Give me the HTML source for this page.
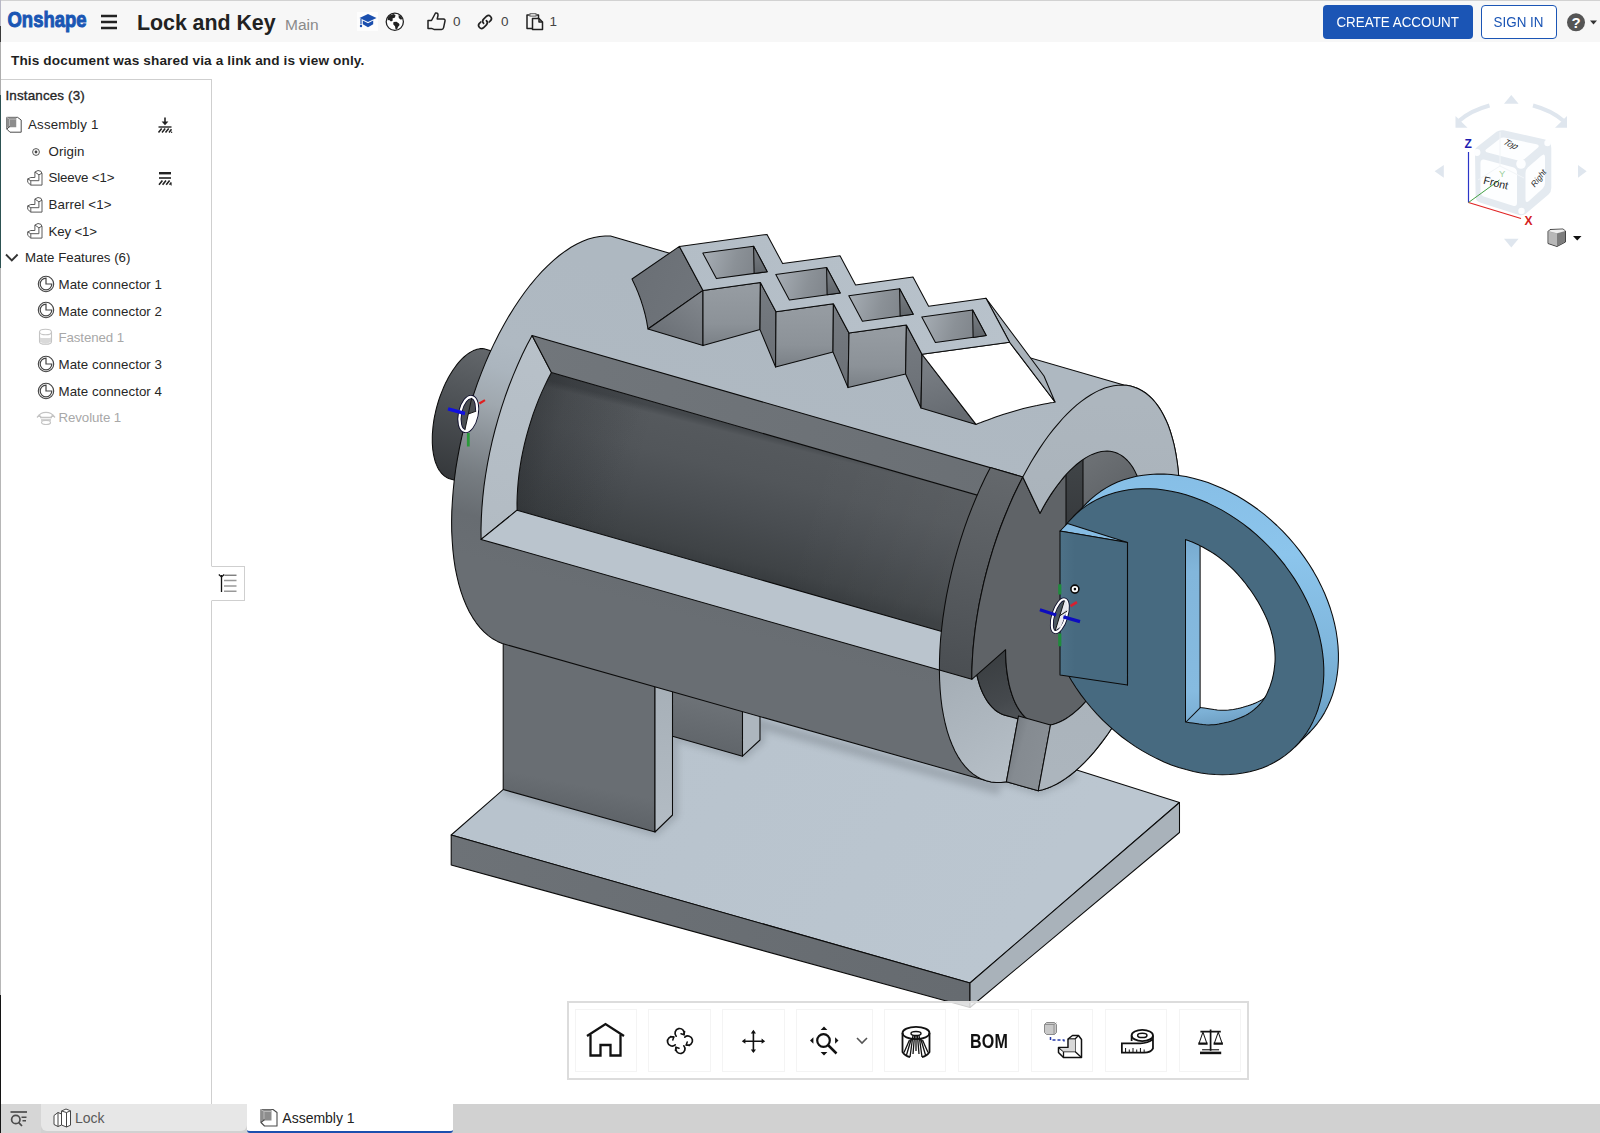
<!DOCTYPE html>
<html lang="en"><head><meta charset="utf-8"><title>Lock and Key | Assembly 1</title>
<style>

html,body{margin:0;padding:0;background:#fff;}
body{width:1600px;height:1133px;overflow:hidden;font-family:"Liberation Sans",sans-serif;color:#222;}
#app{position:relative;width:1600px;height:1133px;overflow:hidden;background:#fff;}
#model{position:absolute;left:0;top:0;}
.abs{position:absolute;white-space:nowrap;}
#hdr{position:absolute;left:0;top:0;width:1600px;height:42px;background:#f7f7f7;}
#topline{position:absolute;left:0;top:0;width:1600px;height:1px;background:#d2d2d2;}
#leftline{position:absolute;left:0;top:0;width:1px;height:1133px;background:linear-gradient(to bottom,#b8b8c6 0,#b8b8c6 26px,#3a3a3a 26px,#3a3a3a 42px,#adadad 42px,#adadad 95px,#2d5252 95px,#2d5252 268px,#b6b6b6 268px,#b6b6b6 995px,#141414 995px,#141414 1133px);}
.t{position:absolute;white-space:nowrap;line-height:1;}
#title{left:137px;top:13.3px;font-size:21.4px;font-weight:bold;color:#222;letter-spacing:-0.05px;}
#branch{left:285px;top:16.5px;font-size:15.5px;color:#8a8a8a;}
.cnt{font-size:13.5px;color:#444;top:15px;}
.btn{position:absolute;top:5px;height:34px;box-sizing:border-box;border-radius:4px;font-size:14.8px;line-height:34px;text-align:center;}
.btn span{display:inline-block;transform:scaleX(0.905);transform-origin:50% 50%;white-space:nowrap;}
#create{left:1323px;width:150px;background:#1b55b5;color:#fff;}
#signin{left:1481px;width:76px;background:#fff;color:#1b55b5;border:1px solid #1b55b5;line-height:32px;}
#msg{left:11px;top:54px;font-size:13.6px;font-weight:bold;color:#1f1f1f;letter-spacing:0.13px;}
#panel{position:absolute;left:1px;top:79px;width:211px;height:1025px;background:#fff;border-top:1px solid #cfcfcf;border-right:1px solid #cfcfcf;box-sizing:border-box;}
#ptoggle{position:absolute;left:211px;top:566px;width:34px;height:35px;box-sizing:border-box;border:1px solid #cfcfcf;border-left:1px solid #fff;background:#fff;}
.row{position:absolute;white-space:nowrap;font-size:13.3px;line-height:1;color:#262626;}
.row.dim{color:#a8a8a8;}
#tabbar{position:absolute;left:0;top:1104px;width:1600px;height:29px;background:#d1d1d1;}
#tabbtn{position:absolute;left:1px;top:0;width:40px;height:29px;background:#d6d6d6;}
#tab1{position:absolute;left:41px;top:0;width:206px;height:27px;background:#e7e7e7;border-radius:0 0 6px 6px;}
#tab2{position:absolute;left:247px;top:0;width:206px;height:29px;background:#fff;border-bottom:2.5px solid #1b4fae;box-sizing:border-box;border-radius:0 0 3px 3px;}
.tabt{position:absolute;font-size:14px;line-height:1;white-space:nowrap;}
#toolbar{position:absolute;left:567px;top:1001px;width:682px;height:79px;box-sizing:border-box;border:2px solid #dcdcdc;background:rgba(255,255,255,0.8);}
.tb{position:absolute;top:6px;height:63px;box-sizing:border-box;border:1px solid #f4f4f4;background:rgba(255,255,255,0.75);}
svg{overflow:visible}

</style></head>
<body>
<div id="app">
<svg id="model" width="1600" height="1133" viewBox="0 0 1600 1133"><defs><linearGradient id="g1" gradientUnits="userSpaceOnUse" x1="600" y1="700" x2="1000" y2="950"><stop offset="0" stop-color="#b8c3cd"/><stop offset="1" stop-color="#bbc6d0"/></linearGradient><linearGradient id="g2" gradientUnits="userSpaceOnUse" x1="451.2" y1="835" x2="970" y2="983"><stop offset="0" stop-color="#6d7277"/><stop offset="1" stop-color="#666b70"/></linearGradient><filter id="ao" x="-20%" y="-20%" width="140%" height="140%"><feGaussianBlur stdDeviation="3.5"/></filter><linearGradient id="g3" gradientUnits="userSpaceOnUse" x1="700" y1="700" x2="690" y2="750"><stop offset="0" stop-color="#6d7277"/><stop offset="1" stop-color="#5f6469"/></linearGradient><linearGradient id="g4" gradientUnits="userSpaceOnUse" x1="600" y1="660" x2="570" y2="815"><stop offset="0" stop-color="#696e73"/><stop offset="0.8" stop-color="#696e73"/><stop offset="1" stop-color="#5e6368"/></linearGradient><linearGradient id="g5" gradientUnits="userSpaceOnUse" x1="660" y1="690" x2="660" y2="830"><stop offset="0" stop-color="#a7b0b8"/><stop offset="1" stop-color="#b3bcc4"/></linearGradient><linearGradient id="g6" gradientUnits="userSpaceOnUse" x1="486.2097685131967" y1="349.1442768138785" x2="449.7906314868034" y2="478.7094831861216"><stop offset="0" stop-color="#63676b"/><stop offset="0.45" stop-color="#4d5155"/><stop offset="1" stop-color="#35383b"/></linearGradient><linearGradient id="g7" gradientUnits="userSpaceOnUse" x1="822.9589098905919" y1="326.4384051474268" x2="724.3223163101419" y2="677.3492626409577"><stop offset="0" stop-color="#aeb8c1"/><stop offset="0.28" stop-color="#afb9c2"/><stop offset="0.35" stop-color="#abb5be"/><stop offset="0.45" stop-color="#a0a8af"/><stop offset="0.54" stop-color="#8c9399"/><stop offset="0.65" stop-color="#767c81"/><stop offset="0.76" stop-color="#676c71"/><stop offset="0.87" stop-color="#696e73"/><stop offset="1" stop-color="#696e73"/></linearGradient><linearGradient id="g8" gradientUnits="userSpaceOnUse" x1="781.0930191726984" y1="438.60950638964886" x2="746.6953570230444" y2="575.763086933692"><stop offset="0" stop-color="#44484c"/><stop offset="0.05" stop-color="#55595d"/><stop offset="0.3" stop-color="#52565a"/><stop offset="0.6" stop-color="#494d51"/><stop offset="0.9" stop-color="#3f4346"/><stop offset="1" stop-color="#383c3f"/></linearGradient><linearGradient id="g9" gradientUnits="userSpaceOnUse" x1="545" y1="380" x2="640" y2="420"><stop offset="0" stop-color="rgba(40,43,46,0.25)"/><stop offset="1" stop-color="rgba(40,43,46,0)"/></linearGradient><linearGradient id="g10" gradientUnits="userSpaceOnUse" x1="527.7296803180088" y1="431.4399109360877" x2="984.6006867340005" y2="562.5058004148844"><stop offset="0" stop-color="rgba(20,22,24,0.22)"/><stop offset="0.06" stop-color="rgba(20,22,24,0.10)"/><stop offset="0.25" stop-color="rgba(20,22,24,0)"/><stop offset="0.6" stop-color="rgba(255,255,255,0)"/><stop offset="1" stop-color="rgba(255,255,255,0.04)"/></linearGradient><linearGradient id="g11" gradientUnits="userSpaceOnUse" x1="532.0666632526941" y1="335.4540499790758" x2="481.1313473124834" y2="539.430596575472"><stop offset="0" stop-color="#b8c1c9"/><stop offset="1" stop-color="#b2bbc3"/></linearGradient><linearGradient id="g12" gradientUnits="userSpaceOnUse" x1="532.0666632526941" y1="335.4540499790758" x2="1022.8112229877044" y2="476.9669085496531"><stop offset="0" stop-color="#71767b"/><stop offset="1" stop-color="#6a6f74"/></linearGradient><linearGradient id="g13" gradientUnits="userSpaceOnUse" x1="939.3716237132005" y1="670.0226014641548" x2="1006.3824519635114" y2="781.7012543905088"><stop offset="0" stop-color="#a4adb5"/><stop offset="1" stop-color="#b6bfc7"/></linearGradient><linearGradient id="g14" gradientUnits="userSpaceOnUse" x1="1005.5840098833804" y1="649.7055607163845" x2="1035.3886539650744" y2="723.8423960744309"><stop offset="0" stop-color="#3a3e41"/><stop offset="0.6" stop-color="#45494d"/><stop offset="1" stop-color="#54585c"/></linearGradient><linearGradient id="g15" gradientUnits="userSpaceOnUse" x1="1022.8112229877044" y1="476.9669085496531" x2="971.8244590864895" y2="679.2712010613104"><stop offset="0" stop-color="#64686c"/><stop offset="0.5" stop-color="#585c60"/><stop offset="1" stop-color="#4a4e52"/></linearGradient><linearGradient id="g16" gradientUnits="userSpaceOnUse" x1="1066" y1="470" x2="1066" y2="530"><stop offset="0" stop-color="#3f4346"/><stop offset="1" stop-color="#36393c"/></linearGradient><linearGradient id="g17" gradientUnits="userSpaceOnUse" x1="1090" y1="460" x2="1120" y2="500"><stop offset="0" stop-color="#6c7074"/><stop offset="1" stop-color="#5f6367"/></linearGradient><linearGradient id="g18" gradientUnits="userSpaceOnUse" x1="1018.5070150753702" y1="715.8606307135934" x2="1050.4655082898867" y2="724.9583419141582"><stop offset="0" stop-color="#777d83"/><stop offset="0.35" stop-color="#858b91"/><stop offset="1" stop-color="#888e94"/></linearGradient><linearGradient id="g19" gradientUnits="userSpaceOnUse" x1="1081.3054350203313" y1="401.3220892772816" x2="1070.0945649796688" y2="775.2779107227184"><stop offset="0" stop-color="#adb6be"/><stop offset="0.5" stop-color="#a8b1b9"/><stop offset="1" stop-color="#acb5bd"/></linearGradient><linearGradient id="g20" gradientUnits="userSpaceOnUse" x1="640" y1="280" x2="690" y2="300"><stop offset="0" stop-color="#6b7076"/><stop offset="1" stop-color="#6f747a"/></linearGradient><linearGradient id="g21" gradientUnits="userSpaceOnUse" x1="700" y1="300" x2="670" y2="340"><stop offset="0" stop-color="#80858b"/><stop offset="1" stop-color="#6c7177"/></linearGradient><linearGradient id="g22" gradientUnits="userSpaceOnUse" x1="703.0" y1="290.4" x2="703" y2="345.6"><stop offset="0" stop-color="#959ba1"/><stop offset="0.6" stop-color="#8c9298"/><stop offset="1" stop-color="#7a8086"/></linearGradient><linearGradient id="g23" gradientUnits="userSpaceOnUse" x1="760.3608932714617" y1="282.54234338747096" x2="775.6" y2="367"><stop offset="0" stop-color="#777c82"/><stop offset="1" stop-color="#6a6f75"/></linearGradient><linearGradient id="g24" gradientUnits="userSpaceOnUse" x1="776.0" y1="311.7" x2="775.6" y2="367"><stop offset="0" stop-color="#959ba1"/><stop offset="0.6" stop-color="#8c9298"/><stop offset="1" stop-color="#7a8086"/></linearGradient><linearGradient id="g25" gradientUnits="userSpaceOnUse" x1="833.3608932714617" y1="303.842343387471" x2="848" y2="387.6"><stop offset="0" stop-color="#777c82"/><stop offset="1" stop-color="#6a6f75"/></linearGradient><linearGradient id="g26" gradientUnits="userSpaceOnUse" x1="849.0" y1="333.0" x2="848" y2="387.6"><stop offset="0" stop-color="#959ba1"/><stop offset="0.6" stop-color="#8c9298"/><stop offset="1" stop-color="#7a8086"/></linearGradient><linearGradient id="g27" gradientUnits="userSpaceOnUse" x1="906.3608932714617" y1="325.142343387471" x2="921" y2="408"><stop offset="0" stop-color="#777c82"/><stop offset="1" stop-color="#6a6f75"/></linearGradient><linearGradient id="g28" gradientUnits="userSpaceOnUse" x1="922.0" y1="354.3" x2="940" y2="420"><stop offset="0" stop-color="#7d8288"/><stop offset="1" stop-color="#666b71"/></linearGradient><linearGradient id="g29" gradientUnits="userSpaceOnUse" x1="679.4" y1="246.4" x2="1009.6" y2="342.3"><stop offset="0" stop-color="#b3bdc6"/><stop offset="1" stop-color="#b8c2cb"/></linearGradient><linearGradient id="g30" gradientUnits="userSpaceOnUse" x1="702.752" y1="253.12" x2="767.2479999999999" y2="271.68"><stop offset="0" stop-color="#a7aeb5"/><stop offset="0.5" stop-color="#8b9197"/><stop offset="1" stop-color="#7a7f85"/></linearGradient><linearGradient id="g31" gradientUnits="userSpaceOnUse" x1="753.56" y1="246.16" x2="754.06" y2="273.48657534246576"><stop offset="0" stop-color="#7c8187"/><stop offset="1" stop-color="#60656a"/></linearGradient><linearGradient id="g32" gradientUnits="userSpaceOnUse" x1="775.752" y1="274.42" x2="840.2479999999999" y2="292.98"><stop offset="0" stop-color="#a7aeb5"/><stop offset="0.5" stop-color="#8b9197"/><stop offset="1" stop-color="#7a7f85"/></linearGradient><linearGradient id="g33" gradientUnits="userSpaceOnUse" x1="826.56" y1="267.46000000000004" x2="827.06" y2="294.78657534246577"><stop offset="0" stop-color="#7c8187"/><stop offset="1" stop-color="#60656a"/></linearGradient><linearGradient id="g34" gradientUnits="userSpaceOnUse" x1="848.752" y1="295.72" x2="913.2479999999999" y2="314.28000000000003"><stop offset="0" stop-color="#a7aeb5"/><stop offset="0.5" stop-color="#8b9197"/><stop offset="1" stop-color="#7a7f85"/></linearGradient><linearGradient id="g35" gradientUnits="userSpaceOnUse" x1="899.56" y1="288.76000000000005" x2="900.06" y2="316.0865753424658"><stop offset="0" stop-color="#7c8187"/><stop offset="1" stop-color="#60656a"/></linearGradient><linearGradient id="g36" gradientUnits="userSpaceOnUse" x1="921.752" y1="317.02000000000004" x2="986.2479999999999" y2="335.58000000000004"><stop offset="0" stop-color="#a7aeb5"/><stop offset="0.5" stop-color="#8b9197"/><stop offset="1" stop-color="#7a7f85"/></linearGradient><linearGradient id="g37" gradientUnits="userSpaceOnUse" x1="972.56" y1="310.06000000000006" x2="973.06" y2="337.3865753424658"><stop offset="0" stop-color="#7c8187"/><stop offset="1" stop-color="#60656a"/></linearGradient><linearGradient id="g38" gradientUnits="userSpaceOnUse" x1="1200" y1="470" x2="1200" y2="750"><stop offset="0" stop-color="#86bee6"/><stop offset="0.3" stop-color="#8cc5ec"/><stop offset="0.62" stop-color="#80b7dd"/><stop offset="0.85" stop-color="#6fa5ca"/><stop offset="1" stop-color="#6699bd"/></linearGradient><linearGradient id="g39" gradientUnits="userSpaceOnUse" x1="1190" y1="545" x2="1215" y2="725"><stop offset="0" stop-color="#79acd1"/><stop offset="0.15" stop-color="#82b6db"/><stop offset="0.8" stop-color="#86bbe0"/><stop offset="0.92" stop-color="#7db1d6"/><stop offset="1" stop-color="#6e9fc3"/></linearGradient><linearGradient id="g40" gradientUnits="userSpaceOnUse" x1="1060" y1="600" x2="1075" y2="600"><stop offset="0" stop-color="#4d7187"/><stop offset="1" stop-color="#476a80"/></linearGradient></defs><path d="M451.2 835.0 L970.0 983.0 L1179.5 802.5 L672.0 642.0 Z" fill="url(#g1)" stroke="#0b0b0b" stroke-width="1.05" stroke-linejoin="round"/>
<path d="M451.2 835.0 L970.0 983.0 L970.0 1007.5 L451.2 865.0 Z" fill="url(#g2)" stroke="#0b0b0b" stroke-width="1.05" stroke-linejoin="round"/>
<path d="M970.0 983.0 L1179.5 802.5 L1179.5 832.5 L970.0 1007.5 Z" fill="#a9b2ba" stroke="#0b0b0b" stroke-width="1.05" stroke-linejoin="round"/>
<clipPath id="plateclip"><path d="M451.2 835.0 L970.0 983.0 L1179.5 802.5 L672.0 642.0 Z"/></clipPath>
<g clip-path="url(#plateclip)"><g filter="url(#ao)" opacity="0.26" fill="none" stroke="#4a5057" stroke-width="7" stroke-linejoin="round">
<path d="M503 789.5 L655 832 L674 815 L674 740"/><path d="M672 736 L742.5 756 L761 740 L761 718"/><path d="M960 770 L1007 781.5 L1039 791 L1075 775"/><path d="M672 700 L1000 790" stroke-width="10"/>
</g></g>
<path d="M672.5 684.0 L742.5 703.7 L742.5 756.2 L672.5 736.2 Z" fill="url(#g3)" stroke="#0b0b0b" stroke-width="1.05" stroke-linejoin="round"/>
<path d="M742.5 703.7 L760.0 708.7 L760.0 740.0 L742.5 756.2 Z" fill="#adb6be" stroke="#0b0b0b" stroke-width="1.05" stroke-linejoin="round"/>
<path d="M503.2 637.7 L655.0 681.5 L655.0 832.0 L503.2 789.5 Z" fill="url(#g4)" stroke="#0b0b0b" stroke-width="1.05" stroke-linejoin="round"/>
<path d="M655.0 681.5 L672.5 686.5 L672.5 815.0 L655.0 832.0 Z" fill="url(#g5)" stroke="#0b0b0b" stroke-width="1.05" stroke-linejoin="round"/>
<path d="M484.0 348.7 L482.3 348.6 L480.6 348.6 L478.8 348.9 L477.0 349.3 L475.2 349.9 L473.4 350.6 L471.5 351.6 L469.6 352.7 L467.8 353.9 L465.9 355.4 L464.0 357.0 L462.2 358.7 L460.3 360.7 L458.5 362.7 L456.7 364.9 L455.0 367.2 L453.2 369.7 L451.6 372.3 L449.9 375.0 L448.3 377.8 L446.8 380.7 L445.3 383.6 L443.9 386.7 L442.6 389.9 L441.3 393.1 L440.1 396.3 L438.9 399.7 L437.9 403.0 L436.9 406.4 L436.0 409.8 L435.3 413.2 L434.5 416.7 L433.9 420.1 L433.4 423.5 L433.0 426.8 L432.7 430.2 L432.4 433.5 L432.3 436.7 L432.3 439.9 L432.3 443.0 L432.5 446.0 L432.7 448.9 L433.1 451.8 L433.5 454.5 L434.1 457.1 L434.7 459.7 L435.4 462.0 L436.3 464.3 L437.2 466.4 L438.2 468.4 L439.2 470.2 L440.4 471.8 L441.6 473.4 L442.9 474.7 L444.3 475.9 L445.7 476.9 L447.2 477.7 L448.7 478.4 L543.5 505.5 L578.7 376.0 Z" fill="url(#g6)" stroke="#0b0b0b" stroke-width="1.05" stroke-linejoin="round"/>
<path d="M610.5 236.1 L605.1 236.0 L599.7 236.4 L594.1 237.5 L588.4 239.1 L582.7 241.3 L576.9 244.0 L571.0 247.3 L565.2 251.2 L559.3 255.5 L553.5 260.4 L547.6 265.8 L541.8 271.7 L536.1 278.0 L530.4 284.8 L524.9 292.0 L519.4 299.7 L514.1 307.7 L508.9 316.1 L503.8 324.9 L498.9 334.0 L494.2 343.4 L489.7 353.0 L485.4 362.9 L481.3 373.1 L477.4 383.4 L473.8 393.9 L470.4 404.5 L467.3 415.2 L464.4 426.0 L461.8 436.8 L459.5 447.6 L457.5 458.4 L455.7 469.2 L454.3 479.9 L453.2 490.5 L452.4 500.9 L451.8 511.2 L451.6 521.3 L451.7 531.1 L452.2 540.7 L452.9 550.1 L453.9 559.1 L455.2 567.8 L456.9 576.1 L458.8 584.1 L461.0 591.7 L463.5 598.8 L466.3 605.5 L469.3 611.8 L472.7 617.6 L476.2 622.8 L480.0 627.6 L484.0 631.9 L488.3 635.6 L492.7 638.8 L497.4 641.4 L502.2 643.5 L983.9 780.0 L989.3 781.6 L994.8 782.4 L1000.5 782.4 L1006.4 781.7 L1038.3 790.8 L1043.3 789.6 L1048.4 787.8 L1053.6 785.6 L1058.9 782.8 L1064.1 779.6 L1069.5 775.8 L1074.8 771.5 L1080.1 766.7 L1085.4 761.5 L1090.7 755.8 L1096.0 749.7 L1101.2 743.1 L1106.3 736.2 L1111.4 728.8 L1116.3 721.1 L1121.2 713.1 L1125.9 704.7 L1130.5 696.0 L1135.0 687.0 L1139.3 677.7 L1143.4 668.2 L1147.3 658.5 L1151.1 648.7 L1154.7 638.6 L1158.0 628.5 L1161.2 618.2 L1164.1 607.8 L1166.8 597.4 L1169.2 587.0 L1171.4 576.6 L1173.4 566.2 L1175.0 555.8 L1176.5 545.6 L1177.6 535.5 L1178.5 525.5 L1179.1 515.6 L1179.5 506.0 L1179.6 496.5 L1179.4 487.4 L1178.9 478.4 L1178.2 469.8 L1177.1 461.5 L1175.9 453.5 L1174.3 445.9 L1172.5 438.6 L1170.5 431.8 L1168.2 425.3 L1165.6 419.3 L1162.8 413.7 L1159.8 408.6 L1156.6 404.0 L1153.1 399.8 L1149.5 396.2 L1145.6 393.0 L1141.6 390.4 L1137.4 388.3 L1133.0 386.7 L1128.5 385.6 L1123.8 385.1 Z" fill="url(#g7)" stroke="#0b0b0b" stroke-width="1.05" stroke-linejoin="round"/>
<path d="M551.4 372.5 L548.0 378.9 L544.8 385.6 L541.7 392.4 L538.7 399.4 L535.9 406.6 L533.2 413.9 L530.8 421.3 L528.5 428.8 L526.4 436.3 L524.5 443.9 L522.8 451.5 L521.3 459.1 L520.1 466.7 L519.0 474.2 L518.2 481.6 L517.6 489.0 L517.2 496.2 L517.0 503.3 L517.1 510.2 L973.3 640.5 L973.3 640.5 L973.3 633.6 L973.6 626.6 L974.1 619.5 L974.8 612.2 L975.7 604.9 L976.8 597.4 L978.2 589.9 L979.7 582.4 L981.4 574.9 L983.3 567.3 L985.4 559.8 L987.6 552.4 L990.0 545.1 L992.6 537.8 L995.4 530.7 L998.2 523.7 L1001.3 516.9 L1004.4 510.3 L1007.7 503.8 Z" fill="url(#g8)"/>
<path d="M551.4 372.5 L548.0 378.9 L544.8 385.6 L541.7 392.4 L538.7 399.4 L535.9 406.6 L533.2 413.9 L530.8 421.3 L528.5 428.8 L526.4 436.3 L524.5 443.9 L522.8 451.5 L521.3 459.1 L520.1 466.7 L519.0 474.2 L518.2 481.6 L517.6 489.0 L517.2 496.2 L517.0 503.3 L517.1 510.2 L973.3 640.5 L973.3 640.5 L973.3 633.6 L973.6 626.6 L974.1 619.5 L974.8 612.2 L975.7 604.9 L976.8 597.4 L978.2 589.9 L979.7 582.4 L981.4 574.9 L983.3 567.3 L985.4 559.8 L987.6 552.4 L990.0 545.1 L992.6 537.8 L995.4 530.7 L998.2 523.7 L1001.3 516.9 L1004.4 510.3 L1007.7 503.8 Z" fill="url(#g9)"/>
<path d="M551.4 372.5 L548.0 378.9 L544.8 385.6 L541.7 392.4 L538.7 399.4 L535.9 406.6 L533.2 413.9 L530.8 421.3 L528.5 428.8 L526.4 436.3 L524.5 443.9 L522.8 451.5 L521.3 459.1 L520.1 466.7 L519.0 474.2 L518.2 481.6 L517.6 489.0 L517.2 496.2 L517.0 503.3 L517.1 510.2 L973.3 640.5 L973.3 640.5 L973.3 633.6 L973.6 626.6 L974.1 619.5 L974.8 612.2 L975.7 604.9 L976.8 597.4 L978.2 589.9 L979.7 582.4 L981.4 574.9 L983.3 567.3 L985.4 559.8 L987.6 552.4 L990.0 545.1 L992.6 537.8 L995.4 530.7 L998.2 523.7 L1001.3 516.9 L1004.4 510.3 L1007.7 503.8 Z" fill="url(#g10)"/>
<path d="M532.1 335.5 L527.0 345.0 L522.2 354.8 L517.6 365.0 L513.2 375.4 L509.0 386.0 L505.1 396.8 L501.5 407.7 L498.1 418.8 L495.0 430.0 L492.2 441.2 L489.7 452.5 L487.5 463.7 L485.6 475.0 L484.0 486.1 L482.8 497.1 L481.9 508.0 L481.3 518.7 L481.0 529.2 L481.1 539.4 L517.1 510.2 L517.0 503.3 L517.2 496.2 L517.6 489.0 L518.2 481.6 L519.0 474.2 L520.1 466.7 L521.3 459.1 L522.8 451.5 L524.5 443.9 L526.4 436.3 L528.5 428.8 L530.8 421.3 L533.2 413.9 L535.9 406.6 L538.7 399.4 L541.7 392.4 L544.8 385.6 L548.0 378.9 L551.4 372.5 Z" fill="url(#g11)" stroke="#0b0b0b" stroke-width="1.05" stroke-linejoin="round"/>
<path d="M532.1 335.5 L1022.8 477.0 L1040.0 513.2 L551.4 372.5 Z" fill="url(#g12)" stroke="#0b0b0b" stroke-width="1.05" stroke-linejoin="round"/>
<path d="M481.1 539.4 L939.4 670.0 L973.3 640.5 L517.1 510.2 Z" fill="#bac4cd" stroke="#0b0b0b" stroke-width="1.05" stroke-linejoin="round"/>
<path d="M939.4 670.0 L939.6 679.8 L940.1 689.2 L940.9 698.3 L942.0 707.1 L943.5 715.5 L945.2 723.5 L947.2 731.1 L949.5 738.2 L952.1 744.8 L954.9 751.0 L958.0 756.6 L961.4 761.8 L965.0 766.4 L968.8 770.4 L972.9 773.9 L977.1 776.8 L981.6 779.1 L986.2 780.8 L991.1 781.9 L996.0 782.4 L1001.1 782.4 L1006.4 781.7 L1018.5 715.9 L1015.0 716.3 L1011.5 716.4 L1008.2 716.0 L1004.9 715.2 L1001.8 714.1 L998.8 712.5 L995.9 710.6 L993.2 708.2 L990.6 705.5 L988.1 702.4 L985.9 698.9 L983.8 695.1 L981.8 691.0 L980.1 686.5 L978.6 681.7 L977.2 676.6 L976.0 671.2 L975.1 665.5 L974.3 659.6 L973.8 653.4 L973.4 647.1 L973.3 640.5 Z" fill="url(#g13)" stroke="#0b0b0b" stroke-width="1.05" stroke-linejoin="round"/>
<path d="M973.3 640.5 L973.4 646.9 L973.7 653.1 L974.3 659.1 L975.0 664.9 L975.9 670.4 L977.0 675.7 L978.3 680.7 L979.7 685.5 L981.4 689.9 L983.2 694.0 L985.2 697.8 L987.4 701.3 L989.7 704.4 L992.1 707.2 L994.7 709.7 L997.5 711.7 L1000.4 713.4 L1003.3 714.7 L1035.4 723.8 L1032.4 722.5 L1029.6 720.8 L1026.8 718.8 L1024.2 716.4 L1021.8 713.6 L1019.5 710.5 L1017.4 707.0 L1015.4 703.2 L1013.6 699.1 L1012.0 694.6 L1010.5 689.9 L1009.2 684.9 L1008.1 679.6 L1007.2 674.1 L1006.5 668.3 L1006.0 662.3 L1005.7 656.1 L1005.6 649.7 Z" fill="url(#g14)" stroke="#0b0b0b" stroke-width="1.05" stroke-linejoin="round"/>
<path d="M990.4 467.6 L985.5 477.1 L980.8 486.9 L976.4 497.0 L972.1 507.4 L968.0 517.9 L964.2 528.7 L960.6 539.6 L957.3 550.6 L954.2 561.7 L951.4 572.8 L948.9 584.0 L946.6 595.1 L944.7 606.2 L943.0 617.3 L941.7 628.2 L940.6 638.9 L939.9 649.5 L939.5 659.9 L939.4 670.0 L971.8 679.3 L971.9 669.2 L972.4 658.8 L973.1 648.2 L974.2 637.5 L975.5 626.6 L977.2 615.5 L979.1 604.4 L981.4 593.3 L983.9 582.1 L986.7 571.0 L989.8 559.9 L993.1 548.9 L996.7 538.0 L1000.5 527.3 L1004.6 516.7 L1008.9 506.4 L1013.3 496.3 L1018.0 486.5 L1022.8 477.0 Z" fill="url(#g15)" stroke="#0b0b0b" stroke-width="1.05" stroke-linejoin="round"/>
<path d="M1022.8 477.0 L1018.0 486.5 L1013.3 496.3 L1008.9 506.4 L1004.6 516.7 L1000.5 527.3 L996.7 538.0 L993.1 548.9 L989.8 559.9 L986.7 571.0 L983.9 582.1 L981.4 593.3 L979.1 604.4 L977.2 615.5 L975.5 626.6 L974.2 637.5 L973.1 648.2 L972.4 658.8 L971.9 669.2 L971.8 679.3 L1005.6 649.7 L1005.7 656.1 L1006.0 662.3 L1006.5 668.3 L1007.3 674.1 L1008.2 679.7 L1009.2 684.9 L1010.5 690.0 L1012.0 694.7 L1013.6 699.1 L1015.4 703.2 L1017.4 707.0 L1019.6 710.5 L1021.9 713.6 L1024.3 716.4 L1026.9 718.8 L1029.6 720.9 L1032.5 722.6 L1035.5 723.9 L1038.6 724.8 L1041.8 725.3 L1045.1 725.5 L1048.4 725.3 L1051.9 724.7 L1055.4 723.7 L1059.0 722.3 L1062.6 720.6 L1066.3 718.4 L1070.0 716.0 L1073.7 713.1 L1077.4 709.9 L1081.1 706.4 L1084.8 702.5 L1088.4 698.4 L1092.1 693.9 L1095.7 689.1 L1099.2 684.0 L1102.6 678.7 L1106.0 673.1 L1109.3 667.3 L1112.5 661.2 L1115.6 655.0 L1118.6 648.6 L1121.5 642.0 L1124.3 635.2 L1126.9 628.3 L1129.3 621.3 L1131.6 614.2 L1133.8 607.1 L1135.8 599.8 L1137.6 592.6 L1139.3 585.3 L1140.8 578.1 L1142.0 570.9 L1143.2 563.7 L1144.1 556.6 L1144.8 549.6 L1145.3 542.7 L1145.7 535.9 L1145.8 529.2 L1145.8 522.8 L1145.5 516.5 L1145.1 510.4 L1144.4 504.5 L1143.6 498.9 L1142.6 493.5 L1141.4 488.4 L1140.0 483.6 L1138.4 479.0 L1136.6 474.8 L1134.7 470.9 L1132.6 467.3 L1130.4 464.0 L1128.0 461.1 L1125.5 458.6 L1122.8 456.4 L1120.0 454.6 L1117.0 453.2 L1114.0 452.1 L1110.8 451.4 L1107.5 451.1 L1104.2 451.2 L1100.8 451.7 L1097.3 452.5 L1093.7 453.8 L1090.1 455.4 L1086.4 457.4 L1082.8 459.7 L1079.1 462.4 L1075.4 465.5 L1071.6 468.9 L1067.9 472.6 L1064.3 476.7 L1060.6 481.1 L1057.0 485.7 L1053.5 490.7 L1050.0 495.9 L1046.6 501.4 L1043.2 507.2 L1040.0 513.2 Z" fill="#5f6367" stroke="#0b0b0b" stroke-width="1.05" stroke-linejoin="round"/>
<clipPath id="holeclip"><path d="M1114.0 452.1 L1117.0 453.2 L1120.0 454.6 L1122.8 456.4 L1125.4 458.6 L1128.0 461.1 L1130.4 464.0 L1132.6 467.3 L1134.7 470.8 L1136.6 474.7 L1138.4 479.0 L1139.9 483.5 L1141.3 488.3 L1142.5 493.4 L1143.6 498.8 L1144.4 504.4 L1145.0 510.2 L1145.5 516.3 L1145.8 522.6 L1145.8 529.0 L1145.7 535.6 L1145.3 542.4 L1144.8 549.3 L1144.1 556.3 L1143.2 563.3 L1142.1 570.5 L1140.8 577.7 L1139.4 584.9 L1137.7 592.2 L1135.9 599.4 L1133.9 606.6 L1131.8 613.8 L1129.5 620.8 L1127.0 627.8 L1124.5 634.7 L1121.7 641.5 L1118.9 648.1 L1115.9 654.5 L1112.8 660.7 L1109.6 666.8 L1106.3 672.6 L1103.0 678.2 L1099.5 683.6 L1096.0 688.6 L1092.4 693.4 L1088.8 697.9 L1085.2 702.1 L1081.5 706.0 L1077.8 709.6 L1074.1 712.8 L1070.4 715.7 L1066.7 718.2 L1063.0 720.3 L1059.4 722.1 L1055.8 723.5 L1052.3 724.6 L1048.9 725.2 L1045.5 725.5 L1042.2 725.4 L1039.0 724.9 L1035.9 724.0 L1032.9 722.8 L1030.0 721.1 L1027.3 719.1 L1024.7 716.8 L1022.2 714.1 L1019.9 711.0 L1017.7 707.6 L1015.7 703.8 L1013.9 699.8 L1012.2 695.4 L1010.7 690.7 L1009.4 685.8 L1008.3 680.5 L1007.4 675.1 L1006.7 669.3 L1006.1 663.4 L1005.8 657.2 L1005.6 650.8 L1005.6 644.3 L1005.9 637.6 L1006.3 630.8 L1006.9 623.9 L1007.7 616.8 L1008.7 609.7 L1009.9 602.5 L1011.3 595.3 L1012.8 588.0 L1014.6 580.8 L1016.5 573.6 L1018.5 566.4 L1020.7 559.3 L1023.1 552.3 L1025.6 545.3 L1028.3 538.5 L1031.1 531.8 L1034.0 525.3 L1037.0 519.0 L1040.2 512.8 L1043.4 506.9 L1046.7 501.2 L1050.2 495.7 L1053.6 490.5 L1057.2 485.5 L1060.8 480.9 L1064.4 476.5 L1068.1 472.5 L1071.8 468.8 L1075.5 465.4 L1079.2 462.3 L1082.9 459.6 L1086.5 457.3 L1090.2 455.3 L1093.8 453.7 L1097.3 452.5 L1100.8 451.7 L1104.2 451.2 L1107.6 451.1 L1110.8 451.4 L1114.0 452.1 Z"/></clipPath>
<g clip-path="url(#holeclip)">
<path d="M1066.0 440.0 L1083.0 440.0 L1083.0 540.0 L1066.0 540.0 Z" fill="url(#g16)"/>
<path d="M1083.0 440.0 L1160.0 440.0 L1160.0 540.0 L1083.0 540.0 Z" fill="url(#g17)"/>
<path d="M1066.0 440.0 L1066.0 540.0" fill="none" stroke="#0b0b0b" stroke-width="1.05" stroke-linecap="round" stroke-linejoin="round"/>
<path d="M1083.0 440.0 L1083.0 540.0" fill="none" stroke="#0b0b0b" stroke-width="1.05" stroke-linecap="round" stroke-linejoin="round"/>
</g>
<path d="M1018.5 715.9 L1050.5 725.0 L1038.3 790.8 L1006.4 781.7 Z" fill="url(#g18)" stroke="#0b0b0b" stroke-width="1.05" stroke-linejoin="round"/>
<path d="M1022.8 477.0 L1026.9 469.4 L1031.1 462.0 L1035.5 454.9 L1039.8 448.1 L1044.3 441.5 L1048.8 435.3 L1053.4 429.4 L1058.1 423.8 L1062.7 418.5 L1067.4 413.6 L1072.1 409.1 L1076.8 404.9 L1081.6 401.1 L1086.3 397.7 L1091.0 394.7 L1095.6 392.1 L1100.2 389.9 L1104.8 388.1 L1109.3 386.7 L1113.7 385.7 L1118.1 385.2 L1122.3 385.0 L1126.5 385.3 L1130.6 386.0 L1134.5 387.2 L1138.3 388.7 L1142.0 390.7 L1145.6 393.0 L1149.0 395.8 L1152.3 398.9 L1155.4 402.5 L1158.3 406.4 L1161.1 410.7 L1163.7 415.4 L1166.1 420.4 L1168.4 425.8 L1170.4 431.5 L1172.2 437.6 L1173.9 443.9 L1175.3 450.6 L1176.5 457.5 L1177.6 464.7 L1178.4 472.2 L1179.0 479.9 L1179.4 487.8 L1179.6 495.9 L1179.5 504.2 L1179.3 512.7 L1178.8 521.4 L1178.1 530.2 L1177.2 539.1 L1176.1 548.1 L1174.8 557.2 L1173.3 566.3 L1171.6 575.5 L1169.7 584.8 L1167.6 594.0 L1165.3 603.2 L1162.8 612.4 L1160.2 621.5 L1157.3 630.6 L1154.3 639.6 L1151.2 648.5 L1147.8 657.2 L1144.4 665.9 L1140.8 674.3 L1137.0 682.6 L1133.2 690.7 L1129.2 698.5 L1125.1 706.2 L1120.9 713.6 L1116.6 720.7 L1112.2 727.6 L1107.7 734.2 L1103.2 740.4 L1098.6 746.4 L1094.0 752.1 L1089.3 757.4 L1084.6 762.3 L1079.9 766.9 L1075.2 771.1 L1070.5 775.0 L1065.8 778.4 L1061.1 781.5 L1056.4 784.2 L1051.8 786.4 L1047.3 788.3 L1042.8 789.7 L1038.3 790.8 L1050.5 725.0 L1053.5 724.3 L1056.5 723.3 L1059.6 722.0 L1062.7 720.5 L1065.8 718.7 L1069.0 716.6 L1072.2 714.3 L1075.4 711.7 L1078.6 708.9 L1081.7 705.8 L1084.9 702.4 L1088.1 698.8 L1091.2 695.0 L1094.3 691.0 L1097.3 686.8 L1100.3 682.3 L1103.3 677.7 L1106.2 672.9 L1109.0 667.9 L1111.8 662.7 L1114.5 657.4 L1117.1 651.9 L1119.6 646.4 L1122.1 640.7 L1124.4 634.8 L1126.6 628.9 L1128.8 622.9 L1130.8 616.9 L1132.7 610.7 L1134.5 604.6 L1136.2 598.4 L1137.7 592.1 L1139.2 585.9 L1140.4 579.7 L1141.6 573.5 L1142.6 567.3 L1143.5 561.2 L1144.2 555.1 L1144.8 549.1 L1145.3 543.1 L1145.6 537.3 L1145.8 531.6 L1145.8 525.9 L1145.7 520.5 L1145.4 515.1 L1145.0 509.9 L1144.5 504.9 L1143.8 500.0 L1142.9 495.3 L1142.0 490.9 L1140.9 486.6 L1139.6 482.5 L1138.2 478.6 L1136.7 475.0 L1135.1 471.6 L1133.4 468.4 L1131.5 465.5 L1129.5 462.9 L1127.4 460.5 L1125.2 458.4 L1122.9 456.5 L1120.5 454.9 L1118.0 453.6 L1115.4 452.5 L1112.7 451.8 L1110.0 451.3 L1107.2 451.1 L1104.3 451.2 L1101.4 451.6 L1098.4 452.2 L1095.3 453.2 L1092.2 454.4 L1089.1 455.9 L1086.0 457.6 L1082.8 459.7 L1079.7 462.0 L1076.5 464.5 L1073.3 467.3 L1070.1 470.4 L1066.9 473.7 L1063.8 477.2 L1060.7 481.0 L1057.6 485.0 L1054.5 489.2 L1051.5 493.6 L1048.5 498.2 L1045.6 503.0 L1042.8 508.0 L1040.0 513.2 Z" fill="url(#g19)" stroke="#0b0b0b" stroke-width="1.05" stroke-linejoin="round"/>
<path d="M632.0 279.0 L679.4 246.4 L703.0 290.4 L648.0 329.0 L647.8 328.0 L647.6 326.7 L647.3 325.1 L647.0 323.4 L646.7 321.5 L646.3 319.6 L645.9 317.8 L645.5 316.0 L645.1 314.3 L644.6 312.5 L644.1 310.7 L643.6 308.9 L643.1 307.1 L642.6 305.4 L642.0 303.7 L641.5 302.0 L641.0 300.4 L640.4 298.8 L639.9 297.3 L639.3 295.8 L638.7 294.3 L638.2 292.9 L637.6 291.4 L637.0 290.0 L636.4 288.5 L635.7 286.9 L634.9 285.3 L634.2 283.8 L633.5 282.3 L632.9 281.0 L632.4 279.8 L632.0 279.0 Z" fill="url(#g20)" stroke="#0b0b0b" stroke-width="1.05" stroke-linejoin="round"/>
<path d="M648.0 329.0 L703.0 290.4 L703.0 345.6 Z" fill="url(#g21)" stroke="#0b0b0b" stroke-width="1.05" stroke-linejoin="round"/>
<path d="M703.0 290.4 L760.4 282.5 L760.0 329.6 L703.0 345.6 Z" fill="url(#g22)" stroke="#0b0b0b" stroke-width="1.05" stroke-linejoin="round"/>
<path d="M760.4 282.5 L776.0 311.7 L775.6 367.0 L760.0 329.6 Z" fill="url(#g23)" stroke="#0b0b0b" stroke-width="1.05" stroke-linejoin="round"/>
<path d="M776.0 311.7 L833.4 303.8 L833.0 352.0 L775.6 367.0 Z" fill="url(#g24)" stroke="#0b0b0b" stroke-width="1.05" stroke-linejoin="round"/>
<path d="M833.4 303.8 L849.0 333.0 L848.0 387.6 L833.0 352.0 Z" fill="url(#g25)" stroke="#0b0b0b" stroke-width="1.05" stroke-linejoin="round"/>
<path d="M849.0 333.0 L906.4 325.1 L905.6 374.0 L848.0 387.6 Z" fill="url(#g26)" stroke="#0b0b0b" stroke-width="1.05" stroke-linejoin="round"/>
<path d="M906.4 325.1 L922.0 354.3 L921.0 408.0 L905.6 374.0 Z" fill="url(#g27)" stroke="#0b0b0b" stroke-width="1.05" stroke-linejoin="round"/>
<path d="M922.0 354.3 L976.0 424.4 L921.0 408.0 Z" fill="url(#g28)" stroke="#0b0b0b" stroke-width="1.05" stroke-linejoin="round"/>
<path d="M922.0 354.3 L1009.6 342.3 L1055.0 402.0 L1055.0 402.0 L1053.1 402.4 L1050.6 402.8 L1047.5 403.4 L1044.2 404.0 L1040.6 404.7 L1037.0 405.5 L1033.4 406.2 L1030.0 407.0 L1026.7 407.8 L1023.4 408.6 L1020.0 409.5 L1016.6 410.4 L1013.2 411.4 L1009.8 412.4 L1006.4 413.4 L1003.0 414.5 L999.4 415.7 L995.6 417.0 L991.7 418.5 L987.8 419.9 L984.1 421.3 L980.9 422.6 L978.1 423.6 L976.0 424.4 Z" fill="#ffffff" stroke="#0b0b0b" stroke-width="1.05" stroke-linejoin="round"/>
<path d="M986.0 298.3 L1044.0 376.0 L1055.0 402.0 L1009.6 342.3 Z" fill="#aab3bb" stroke="#0b0b0b" stroke-width="1.05" stroke-linejoin="round"/>
<path d="M679.4 246.4 L767.0 234.4 L782.6 263.6 L840.0 255.7 L855.6 284.9 L913.0 277.0 L928.6 306.2 L986.0 298.3 L1009.6 342.3 L922.0 354.3 L906.4 325.1 L849.0 333.0 L833.4 303.8 L776.0 311.7 L760.4 282.5 L703.0 290.4 Z" fill="url(#g29)" stroke="#0b0b0b" stroke-width="1.05" stroke-linejoin="round"/>
<path d="M702.8 253.1 L753.6 246.2 L767.2 271.7 L716.4 278.6 Z" fill="url(#g30)" stroke="#0b0b0b" stroke-width="1.05" stroke-linejoin="round"/>
<path d="M753.6 246.2 L767.2 271.7 L754.1 273.5 Z" fill="url(#g31)" stroke="#0b0b0b" stroke-width="1.05" stroke-linejoin="round"/>
<path d="M775.8 274.4 L826.6 267.5 L840.2 293.0 L789.4 299.9 Z" fill="url(#g32)" stroke="#0b0b0b" stroke-width="1.05" stroke-linejoin="round"/>
<path d="M826.6 267.5 L840.2 293.0 L827.1 294.8 Z" fill="url(#g33)" stroke="#0b0b0b" stroke-width="1.05" stroke-linejoin="round"/>
<path d="M848.8 295.7 L899.6 288.8 L913.2 314.3 L862.4 321.2 Z" fill="url(#g34)" stroke="#0b0b0b" stroke-width="1.05" stroke-linejoin="round"/>
<path d="M899.6 288.8 L913.2 314.3 L900.1 316.1 Z" fill="url(#g35)" stroke="#0b0b0b" stroke-width="1.05" stroke-linejoin="round"/>
<path d="M921.8 317.0 L972.6 310.1 L986.2 335.6 L935.4 342.5 Z" fill="url(#g36)" stroke="#0b0b0b" stroke-width="1.05" stroke-linejoin="round"/>
<path d="M972.6 310.1 L986.2 335.6 L973.1 337.4 Z" fill="url(#g37)" stroke="#0b0b0b" stroke-width="1.05" stroke-linejoin="round"/>
<clipPath id="kclipb"><rect x="1066" y="400" width="400" height="500"/></clipPath>
<clipPath id="kclipf"><rect x="1060.5" y="400" width="400" height="500"/></clipPath>
<g clip-path="url(#kclipb)">
<path d="M1090.8 499.2 L1095.6 495.1 L1100.7 491.3 L1106.1 487.9 L1111.7 484.8 L1117.6 482.1 L1123.7 479.8 L1130.0 477.9 L1136.5 476.3 L1143.2 475.2 L1150.1 474.4 L1157.0 474.1 L1164.1 474.1 L1171.3 474.5 L1178.6 475.4 L1185.9 476.6 L1193.2 478.2 L1200.6 480.2 L1208.0 482.6 L1215.3 485.4 L1222.6 488.5 L1229.8 492.0 L1237.0 495.8 L1244.0 500.0 L1250.9 504.5 L1257.7 509.3 L1264.3 514.4 L1270.7 519.8 L1276.9 525.5 L1282.9 531.4 L1288.7 537.6 L1294.2 544.0 L1299.5 550.6 L1304.4 557.4 L1309.1 564.3 L1313.5 571.4 L1317.5 578.6 L1321.2 585.9 L1324.6 593.3 L1327.6 600.8 L1330.3 608.3 L1332.6 615.9 L1334.5 623.4 L1336.1 631.0 L1337.2 638.5 L1338.0 645.9 L1338.4 653.3 L1338.4 660.5 L1338.0 667.7 L1337.2 674.7 L1336.1 681.5 L1334.5 688.1 L1332.6 694.6 L1330.3 700.8 L1327.6 706.8 L1324.6 712.6 L1321.2 718.1 L1317.5 723.3 L1313.5 728.2 L1309.1 732.8 L1304.5 737.1 L1299.5 741.0 L1294.2 744.6 L1288.7 747.9 L1283.0 750.8 L1277.0 753.3 L1270.8 755.4 L1264.3 757.1 L1257.7 758.5 L1251.0 759.4 L1244.1 760.0 L1237.0 760.2 L1229.9 759.9 L1222.7 759.3 L1215.4 758.3 L1208.0 756.9 L1200.7 755.0 L1193.3 752.8 L1185.9 750.3 L1178.6 747.3 L1171.4 744.0 L1164.2 740.3 L1157.1 736.3 L1150.1 732.0 L1143.3 727.3 L1136.6 722.4 L1130.1 717.1 L1123.8 711.6 L1117.6 705.8 L1111.8 699.7 L1106.1 693.4 L1100.7 686.9 L1095.6 680.3 L1090.8 673.4 L1086.3 666.4 L1082.1 659.2 L1078.2 651.9 L1074.6 644.6 L1071.5 637.1 L1068.6 629.6 L1066.1 622.1 L1064.0 614.5 L1062.3 607.0 L1060.9 599.5 L1059.9 592.0 L1059.4 584.6 L1059.2 577.3 L1059.4 570.1 L1059.9 563.0 L1060.9 556.1 L1062.3 549.4 L1064.0 542.8 L1066.1 536.5 L1068.6 530.3 L1071.4 524.4 L1074.6 518.8 L1078.2 513.5 L1082.0 508.4 L1086.3 503.7 L1090.8 499.2 Z" fill="url(#g38)" stroke="#0b0b0b" stroke-width="1.05" stroke-linejoin="round"/>
<path d="M1295.1 746.8 L1309.7 732.2 L1087.9 502.0 L1073.3 516.6 Z" fill="url(#g38)"/>
<path d="M1295.1 746.8 L1309.7 732.2" fill="none" stroke="#0b0b0b" stroke-width="1.05" stroke-linecap="round" stroke-linejoin="round"/>
<path d="M1073.3 516.6 L1087.9 502.0" fill="none" stroke="#0b0b0b" stroke-width="1.05" stroke-linecap="round" stroke-linejoin="round"/>
</g>
<clipPath id="dclip"><path d="M1185.5 539.4 L1186.7 539.9 L1188.2 540.5 L1190.1 541.3 L1192.2 542.1 L1194.4 543.1 L1196.6 544.1 L1198.9 545.1 L1201.0 546.2 L1203.1 547.3 L1205.2 548.5 L1207.4 549.7 L1209.6 551.0 L1211.8 552.4 L1214.1 553.8 L1216.3 555.3 L1218.5 556.9 L1220.7 558.6 L1222.9 560.3 L1225.1 562.2 L1227.4 564.1 L1229.6 566.1 L1231.8 568.1 L1233.9 570.2 L1236.0 572.4 L1238.1 574.6 L1240.1 577.0 L1242.2 579.4 L1244.2 581.8 L1246.1 584.3 L1248.0 586.9 L1249.9 589.3 L1251.6 591.8 L1253.3 594.2 L1254.9 596.7 L1256.4 599.1 L1257.9 601.5 L1259.3 604.0 L1260.7 606.4 L1262.0 608.9 L1263.2 611.3 L1264.4 613.7 L1265.5 616.1 L1266.6 618.5 L1267.6 620.9 L1268.5 623.3 L1269.4 625.7 L1270.2 628.2 L1271.0 630.7 L1271.7 633.3 L1272.4 635.9 L1273.0 638.6 L1273.5 641.3 L1274.0 644.1 L1274.4 646.8 L1274.7 649.4 L1274.9 652.0 L1275.0 654.5 L1275.1 657.1 L1275.1 659.5 L1275.0 662.0 L1274.8 664.4 L1274.5 666.8 L1274.2 669.2 L1273.9 671.5 L1273.5 673.8 L1273.0 676.1 L1272.5 678.3 L1271.9 680.6 L1271.2 682.7 L1270.5 684.9 L1269.8 686.9 L1269.0 688.9 L1268.2 690.8 L1267.4 692.6 L1266.6 694.4 L1265.7 696.1 L1264.7 697.7 L1263.7 699.3 L1262.6 700.9 L1261.3 702.5 L1259.9 704.1 L1258.5 705.7 L1256.9 707.2 L1255.2 708.7 L1253.5 710.2 L1251.6 711.6 L1249.7 712.9 L1247.7 714.2 L1245.6 715.4 L1243.3 716.5 L1240.9 717.6 L1238.4 718.6 L1235.8 719.5 L1233.3 720.4 L1230.8 721.2 L1228.3 721.9 L1225.9 722.5 L1223.5 723.1 L1221.2 723.6 L1218.8 724.1 L1216.4 724.4 L1213.9 724.7 L1211.4 724.8 L1208.8 724.9 L1205.9 724.8 L1202.7 724.5 L1199.3 724.1 L1195.9 723.6 L1192.7 723.1 L1189.8 722.7 L1187.3 722.3 L1185.5 722.0 Z"/></clipPath>
<g clip-path="url(#dclip)">
<path d="M1185.5 539.4 L1186.7 539.9 L1188.2 540.5 L1190.1 541.3 L1192.2 542.1 L1194.4 543.1 L1196.6 544.1 L1198.9 545.1 L1201.0 546.2 L1203.1 547.3 L1205.2 548.5 L1207.4 549.7 L1209.6 551.0 L1211.8 552.4 L1214.1 553.8 L1216.3 555.3 L1218.5 556.9 L1220.7 558.6 L1222.9 560.3 L1225.1 562.2 L1227.4 564.1 L1229.6 566.1 L1231.8 568.1 L1233.9 570.2 L1236.0 572.4 L1238.1 574.6 L1240.1 577.0 L1242.2 579.4 L1244.2 581.8 L1246.1 584.3 L1248.0 586.9 L1249.9 589.3 L1251.6 591.8 L1253.3 594.2 L1254.9 596.7 L1256.4 599.1 L1257.9 601.5 L1259.3 604.0 L1260.7 606.4 L1262.0 608.9 L1263.2 611.3 L1264.4 613.7 L1265.5 616.1 L1266.6 618.5 L1267.6 620.9 L1268.5 623.3 L1269.4 625.7 L1270.2 628.2 L1271.0 630.7 L1271.7 633.3 L1272.4 635.9 L1273.0 638.6 L1273.5 641.3 L1274.0 644.1 L1274.4 646.8 L1274.7 649.4 L1274.9 652.0 L1275.0 654.5 L1275.1 657.1 L1275.1 659.5 L1275.0 662.0 L1274.8 664.4 L1274.5 666.8 L1274.2 669.2 L1273.9 671.5 L1273.5 673.8 L1273.0 676.1 L1272.5 678.3 L1271.9 680.6 L1271.2 682.7 L1270.5 684.9 L1269.8 686.9 L1269.0 688.9 L1268.2 690.8 L1267.4 692.6 L1266.6 694.4 L1265.7 696.1 L1264.7 697.7 L1263.7 699.3 L1262.6 700.9 L1261.3 702.5 L1259.9 704.1 L1258.5 705.7 L1256.9 707.2 L1255.2 708.7 L1253.5 710.2 L1251.6 711.6 L1249.7 712.9 L1247.7 714.2 L1245.6 715.4 L1243.3 716.5 L1240.9 717.6 L1238.4 718.6 L1235.8 719.5 L1233.3 720.4 L1230.8 721.2 L1228.3 721.9 L1225.9 722.5 L1223.5 723.1 L1221.2 723.6 L1218.8 724.1 L1216.4 724.4 L1213.9 724.7 L1211.4 724.8 L1208.8 724.9 L1205.9 724.8 L1202.7 724.5 L1199.3 724.1 L1195.9 723.6 L1192.7 723.1 L1189.8 722.7 L1187.3 722.3 L1185.5 722.0 Z" fill="url(#g39)"/>
<path d="M1200.1 524.8 L1201.3 525.3 L1202.8 525.9 L1204.7 526.7 L1206.8 527.5 L1209.0 528.5 L1211.2 529.5 L1213.5 530.5 L1215.6 531.6 L1217.7 532.7 L1219.8 533.9 L1222.0 535.1 L1224.2 536.4 L1226.4 537.8 L1228.7 539.2 L1230.9 540.7 L1233.1 542.3 L1235.3 544.0 L1237.5 545.7 L1239.7 547.6 L1242.0 549.5 L1244.2 551.5 L1246.4 553.5 L1248.5 555.6 L1250.6 557.8 L1252.7 560.0 L1254.7 562.4 L1256.8 564.8 L1258.8 567.2 L1260.7 569.7 L1262.6 572.3 L1264.5 574.7 L1266.2 577.2 L1267.9 579.6 L1269.5 582.1 L1271.0 584.5 L1272.5 586.9 L1273.9 589.4 L1275.3 591.8 L1276.6 594.3 L1277.8 596.7 L1279.0 599.1 L1280.1 601.5 L1281.2 603.9 L1282.2 606.3 L1283.1 608.7 L1284.0 611.1 L1284.8 613.6 L1285.6 616.1 L1286.3 618.7 L1287.0 621.3 L1287.6 624.0 L1288.1 626.7 L1288.6 629.5 L1289.0 632.2 L1289.3 634.8 L1289.5 637.4 L1289.6 639.9 L1289.7 642.5 L1289.7 644.9 L1289.5 647.4 L1289.4 649.8 L1289.1 652.2 L1288.8 654.6 L1288.5 656.9 L1288.1 659.2 L1287.6 661.5 L1287.1 663.7 L1286.5 666.0 L1285.8 668.1 L1285.1 670.3 L1284.4 672.3 L1283.6 674.3 L1282.8 676.2 L1282.0 678.0 L1281.2 679.8 L1280.3 681.5 L1279.3 683.1 L1278.3 684.7 L1277.2 686.3 L1275.9 687.9 L1274.5 689.5 L1273.1 691.1 L1271.5 692.6 L1269.8 694.1 L1268.1 695.6 L1266.2 697.0 L1264.3 698.3 L1262.3 699.6 L1260.2 700.8 L1257.9 701.9 L1255.5 703.0 L1253.0 704.0 L1250.4 704.9 L1247.9 705.8 L1245.4 706.6 L1242.9 707.3 L1240.5 707.9 L1238.1 708.5 L1235.8 709.0 L1233.4 709.5 L1231.0 709.8 L1228.5 710.1 L1226.0 710.2 L1223.4 710.3 L1220.5 710.2 L1217.3 709.9 L1213.9 709.5 L1210.5 709.0 L1207.3 708.5 L1204.4 708.1 L1201.9 707.7 L1200.1 707.4 Z" fill="#ffffff" stroke="#0b0b0b" stroke-width="1.05" stroke-linejoin="round"/>
<path d="M1186.0 722.0 L1200.6 707.4" fill="none" stroke="#0b0b0b" stroke-width="1.05" stroke-linecap="round" stroke-linejoin="round"/>
</g>
<g clip-path="url(#kclipf)">
<path d="M1076.2 513.8 L1081.0 509.7 L1086.1 505.9 L1091.5 502.5 L1097.1 499.4 L1103.0 496.7 L1109.1 494.4 L1115.4 492.5 L1121.9 490.9 L1128.6 489.8 L1135.5 489.0 L1142.4 488.7 L1149.5 488.7 L1156.7 489.1 L1164.0 490.0 L1171.3 491.2 L1178.6 492.8 L1186.0 494.8 L1193.4 497.2 L1200.7 500.0 L1208.0 503.1 L1215.2 506.6 L1222.4 510.4 L1229.4 514.6 L1236.3 519.1 L1243.1 523.9 L1249.7 529.0 L1256.1 534.4 L1262.3 540.1 L1268.3 546.0 L1274.1 552.2 L1279.6 558.6 L1284.9 565.2 L1289.8 572.0 L1294.5 578.9 L1298.9 586.0 L1302.9 593.2 L1306.6 600.5 L1310.0 607.9 L1313.0 615.4 L1315.7 622.9 L1318.0 630.5 L1319.9 638.0 L1321.5 645.6 L1322.6 653.1 L1323.4 660.5 L1323.8 667.9 L1323.8 675.1 L1323.4 682.3 L1322.6 689.3 L1321.5 696.1 L1319.9 702.7 L1318.0 709.2 L1315.7 715.4 L1313.0 721.4 L1310.0 727.2 L1306.6 732.7 L1302.9 737.9 L1298.9 742.8 L1294.5 747.4 L1289.9 751.7 L1284.9 755.6 L1279.6 759.2 L1274.1 762.5 L1268.4 765.4 L1262.4 767.9 L1256.2 770.0 L1249.7 771.7 L1243.1 773.1 L1236.4 774.0 L1229.5 774.6 L1222.4 774.8 L1215.3 774.5 L1208.1 773.9 L1200.8 772.9 L1193.4 771.5 L1186.1 769.6 L1178.7 767.4 L1171.3 764.9 L1164.0 761.9 L1156.8 758.6 L1149.6 754.9 L1142.5 750.9 L1135.5 746.6 L1128.7 741.9 L1122.0 737.0 L1115.5 731.7 L1109.2 726.2 L1103.0 720.4 L1097.2 714.3 L1091.5 708.0 L1086.1 701.5 L1081.0 694.9 L1076.2 688.0 L1071.7 681.0 L1067.5 673.8 L1063.6 666.5 L1060.0 659.2 L1056.9 651.7 L1054.0 644.2 L1051.5 636.7 L1049.4 629.1 L1047.7 621.6 L1046.3 614.1 L1045.3 606.6 L1044.8 599.2 L1044.6 591.9 L1044.8 584.7 L1045.3 577.6 L1046.3 570.7 L1047.7 564.0 L1049.4 557.4 L1051.5 551.1 L1054.0 544.9 L1056.8 539.0 L1060.0 533.4 L1063.6 528.1 L1067.4 523.0 L1071.7 518.3 L1076.2 513.8 Z M1185.5 539.4 L1186.7 539.9 L1188.2 540.5 L1190.1 541.3 L1192.2 542.1 L1194.4 543.1 L1196.6 544.1 L1198.9 545.1 L1201.0 546.2 L1203.1 547.3 L1205.2 548.5 L1207.4 549.7 L1209.6 551.0 L1211.8 552.4 L1214.1 553.8 L1216.3 555.3 L1218.5 556.9 L1220.7 558.6 L1222.9 560.3 L1225.1 562.2 L1227.4 564.1 L1229.6 566.1 L1231.8 568.1 L1233.9 570.2 L1236.0 572.4 L1238.1 574.6 L1240.1 577.0 L1242.2 579.4 L1244.2 581.8 L1246.1 584.3 L1248.0 586.9 L1249.9 589.3 L1251.6 591.8 L1253.3 594.2 L1254.9 596.7 L1256.4 599.1 L1257.9 601.5 L1259.3 604.0 L1260.7 606.4 L1262.0 608.9 L1263.2 611.3 L1264.4 613.7 L1265.5 616.1 L1266.6 618.5 L1267.6 620.9 L1268.5 623.3 L1269.4 625.7 L1270.2 628.2 L1271.0 630.7 L1271.7 633.3 L1272.4 635.9 L1273.0 638.6 L1273.5 641.3 L1274.0 644.1 L1274.4 646.8 L1274.7 649.4 L1274.9 652.0 L1275.0 654.5 L1275.1 657.1 L1275.1 659.5 L1275.0 662.0 L1274.8 664.4 L1274.5 666.8 L1274.2 669.2 L1273.9 671.5 L1273.5 673.8 L1273.0 676.1 L1272.5 678.3 L1271.9 680.6 L1271.2 682.7 L1270.5 684.9 L1269.8 686.9 L1269.0 688.9 L1268.2 690.8 L1267.4 692.6 L1266.6 694.4 L1265.7 696.1 L1264.7 697.7 L1263.7 699.3 L1262.6 700.9 L1261.3 702.5 L1259.9 704.1 L1258.5 705.7 L1256.9 707.2 L1255.2 708.7 L1253.5 710.2 L1251.6 711.6 L1249.7 712.9 L1247.7 714.2 L1245.6 715.4 L1243.3 716.5 L1240.9 717.6 L1238.4 718.6 L1235.8 719.5 L1233.3 720.4 L1230.8 721.2 L1228.3 721.9 L1225.9 722.5 L1223.5 723.1 L1221.2 723.6 L1218.8 724.1 L1216.4 724.4 L1213.9 724.7 L1211.4 724.8 L1208.8 724.9 L1205.9 724.8 L1202.7 724.5 L1199.3 724.1 L1195.9 723.6 L1192.7 723.1 L1189.8 722.7 L1187.3 722.3 L1185.5 722.0 Z" fill="#476a80" stroke="#0b0b0b" stroke-width="1.05" stroke-linejoin="round" fill-rule="evenodd"/>
</g>
<path d="M1060.0 531.0 L1067.5 523.5 L1127.5 542.5 Z" fill="#86bce3" stroke="#0b0b0b" stroke-width="1.05" stroke-linejoin="round"/>
<path d="M1060.0 531.0 L1127.5 542.5 L1127.5 685.0 L1060.0 675.0 Z" fill="url(#g40)" stroke="#0b0b0b" stroke-width="1.05" stroke-linejoin="round"/>
<path d="M1127.5 542.5 L1127.5 685.0" fill="none" stroke="#0b0b0b" stroke-width="1.05" stroke-linecap="round" stroke-linejoin="round"/>
<g>
<g transform="rotate(12 468.300 414)">
<ellipse cx="468.300" cy="414" rx="8.300" ry="17.300" fill="#4b4f53" stroke="#0a0a2a" stroke-width="4"/>
<ellipse cx="468.300" cy="414" rx="8.300" ry="17.300" fill="none" stroke="#ffffff" stroke-width="2.300"/>
<path d="M468.300 414 L476 409 A8.300 17.300 0 0 1 468.300 431.300 Z" fill="#ffffff"/>
<path d="M468.300 397.500 L468.300 430.500 M468.300 414 L475.500 409.500" stroke="#111" stroke-width="0.900" fill="none"/>
</g>
<path d="M448 408.800 L465 413.500" stroke="#1010e0" stroke-width="3.400"/>
<path d="M468.300 433 L468.300 446.500" stroke="#2a9a3a" stroke-width="2.800"/>
<path d="M479.400 403.500 L485 400.100" stroke="#e02020" stroke-width="2.200"/>
</g>
<g>
<path d="M1059.800 584.300 L1059.800 594.600 M1059.800 633.500 L1059.800 646.200" stroke="#1f8c3c" stroke-width="3.200"/>
<g transform="rotate(17 1059.800 615.700)">
<ellipse cx="1059.800" cy="615.700" rx="6.600" ry="17" fill="#4d5862" stroke="#0a0a2a" stroke-width="3.800"/>
<ellipse cx="1059.800" cy="615.700" rx="6.600" ry="17" fill="none" stroke="#ffffff" stroke-width="2.100"/>
<path d="M1059.800 615.700 L1059.800 599.500 A6.600 17 0 0 1 1065.500 607 Z" fill="#e8e8ee"/>
<path d="M1059.800 615.700 L1065.500 607 L1064 626 L1059.800 631 Z" fill="#e8e8ee"/>
<path d="M1059.800 600 L1059.800 631.500 M1059.800 615.700 L1065.500 609" stroke="#111" stroke-width="0.900" fill="none"/>
</g>
<path d="M1039.900 609.700 L1056.200 614.900 M1063.400 616.900 L1080 621.600" stroke="#0c0cc0" stroke-width="3.200"/>
<path d="M1070.500 606.100 L1076.900 602.200" stroke="#d82030" stroke-width="2.600"/>
<circle cx="1074.900" cy="589.100" r="4" fill="#fff" stroke="#0a0a0a" stroke-width="1.600"/><circle cx="1074.900" cy="589.100" r="1.300" fill="#0a0a0a"/>
</g></svg>
<div id="hdr"></div><div id="topline"></div>
<svg class="abs" style="left:0;top:0" width="130" height="42"><text x="7.5" y="27.3" font-family="Liberation Sans, sans-serif" font-weight="bold" font-size="22.8" fill="#1a56b4" stroke="#1a56b4" stroke-width="1" textLength="79" lengthAdjust="spacingAndGlyphs">Onshape</text></svg>
<svg class="abs" style="left:100px;top:13px" width="18" height="18"><path d="M1 3h16M1 9h16M1 15h16" stroke="#222" stroke-width="2.4"/></svg>
<div class="t" id="title">Lock and Key</div>
<div class="t" id="branch">Main</div>
<div class="abs" style="left:357px;top:12px;width:21px;height:19px;background:#fdfdfd"></div>
<svg class="abs" style="left:358px;top:12px" width="20" height="18" viewBox="0 0 20 18"><path d="M10 2 L18.5 6 L10 10 L1.5 6 Z" fill="#1b4fae"/><path d="M4.8 8.6 L10 11.2 L15.2 8.6 L15.2 12.2 L10 15.2 L4.8 12.2 Z" fill="#1b4fae"/><path d="M3 7 L3 12.2" stroke="#1b4fae" stroke-width="1.2"/><circle cx="3" cy="14" r="1.2" fill="#1b4fae"/></svg>
<svg class="abs" style="left:385px;top:11.5px" width="20" height="20" viewBox="0 0 20 20"><circle cx="9.8" cy="9.8" r="8.6" fill="#fff" stroke="#222" stroke-width="1.3"/>
<path d="M5 3.2 L8.5 2 L10.5 3 L10 5.5 L7.5 6.5 L7.8 8.5 L6 9.5 L4.2 8 L2.6 8.2 L2.8 5.8 Z" fill="#222"/>
<path d="M8.5 10 L11.5 9.8 L14 11.5 L14.6 13 L13 15 L12 17.5 L10.5 17 L10 14.2 L8.2 12.2 Z" fill="#222"/>
<path d="M13.5 3 L16 4.6 L17.4 7.2 L15.5 7.5 L13.8 6 Z" fill="#222"/></svg>
<svg class="abs" style="left:426px;top:11px" width="22" height="22" viewBox="0 0 22 22" fill="none" stroke="#222" stroke-width="1.5" stroke-linejoin="round" stroke-linecap="round"><path d="M2 9.5 L5.5 9.5 L9.5 2 Q12.2 1.5 12 4.5 L11.2 8 L17.5 8 Q19.4 8.3 19 10 L17.6 16.6 Q17.2 18.4 15.5 18.4 L8 18.4 L5.5 17.4 L2 17.4 Z"/></svg>
<div class="t cnt" style="left:453px">0</div>
<svg class="abs" style="left:476px;top:13px" width="18" height="18" viewBox="0 0 18 18" fill="none" stroke="#222" stroke-width="1.7" stroke-linecap="round"><path d="M7.6 10.4 a3 3 0 0 1 0 -4.2 l3 -3 a3 3 0 0 1 4.2 4.2 l-1.6 1.6"/><path d="M10.4 7.6 a3 3 0 0 1 0 4.2 l-3 3 a3 3 0 0 1 -4.2 -4.2 l1.6 -1.6"/></svg>
<div class="t cnt" style="left:501px">0</div>
<svg class="abs" style="left:525px;top:12px" width="20" height="20" viewBox="0 0 20 20" fill="none" stroke="#222" stroke-width="1.5" stroke-linejoin="round"><path d="M7 16.5 L2 16.5 L2 3 L5 3 M11 3 L13.5 3 L13.5 6"/><path d="M5 1.6 h6 v2.6 h-6 z" stroke="#777" stroke-width="1.2"/><path d="M7.5 6.5 L14 6.5 L17.5 10 L17.5 17.5 L7.5 17.5 Z" fill="#f7f7f7"/><path d="M14 6.5 L14 10 L17.5 10"/></svg>
<div class="t cnt" style="left:549.5px">1</div>
<div class="btn" id="create"><span>CREATE ACCOUNT</span></div>
<div class="btn" id="signin"><span>SIGN IN</span></div>
<svg class="abs" style="left:1566px;top:12px" width="34" height="20" viewBox="0 0 34 20"><circle cx="10" cy="10.3" r="9" fill="#555"/><text x="10" y="15.6" text-anchor="middle" font-family="Liberation Sans, sans-serif" font-weight="bold" font-size="15" fill="#fff">?</text><path d="M24 8.6 h7 l-3.5 4 z" fill="#333"/></svg>
<div class="t" id="msg">This document was shared via a link and is view only.</div>
<div id="panel"></div><div id="ptoggle"></div>
<svg class="abs" style="left:216px;top:572px" width="24" height="22" viewBox="0 0 24 22" fill="none"><path d="M5.5 3 L5.5 20" stroke="#111" stroke-width="1.3"/><path d="M2.8 2.6 L5.5 5 L8.2 2.6" stroke="#111" stroke-width="1.3"/><path d="M8.5 3.2 h12" stroke="#333" stroke-width="0.9"/><path d="M8 8.5 h12.5 M8 14 h12.5 M8 19.3 h12.5" stroke="#999" stroke-width="1.4"/></svg>
<div class="row" style="left:5.5px;top:89.3px;font-size:13.4px;-webkit-text-stroke:0.35px #262626;letter-spacing:0.15px">Instances (3)</div>
<svg class="abs" style="left:5.3px;top:115.7px" width="18" height="18" viewBox="0 0 20 20" fill="none" stroke="#4a4a4a" stroke-width="1.1" stroke-linejoin="round">
<path d="M2 1.5 L14 1.5 L18 4.5 L18 18 L5.5 18 L2 14.5 Z" fill="#fff"/>
<path d="M2 1.5 L12.5 1.5 L12.5 12.5 L2 12.5 Z" fill="#8d8d8d" stroke="none"/>
<path d="M2 1.5 L5 3.5 L12.5 3.5 M5 3.5 L5 12.5" stroke="#bdbdbd" stroke-width="0.9"/>
<path d="M2 14.5 L5.5 11.5"/>
</svg>
<div class="row" style="left:28px;top:117.7px;letter-spacing:0.18px">Assembly 1</div>
<svg class="abs" style="left:156px;top:116px" width="18" height="18" viewBox="0 0 18 18"><path d="M9 1.5 v6" stroke="#222" stroke-width="1.6"/><path d="M5.6 5.6 L9 9.2 L12.4 5.6 Z" fill="#222"/><path d="M2.5 11 h13" stroke="#222" stroke-width="1.4"/><path d="M2.5 16.5 l3.2 -4 M6 16.5 l3.2 -4 M9.5 16.5 l3.2 -4 M13 16.5 l2.5 -3.2" stroke="#222" stroke-width="1.5"/><circle cx="15.6" cy="16.3" r="0.7" fill="#222"/></svg>
<svg class="abs" style="left:29.5px;top:145.5px" width="12" height="12" viewBox="0 0 12 12"><circle cx="6" cy="6" r="3.4" fill="none" stroke="#444" stroke-width="0.9"/><circle cx="6" cy="6" r="1.4" fill="#444"/></svg>
<div class="row" style="left:48.5px;top:144.6px;letter-spacing:0.1px">Origin</div>
<svg class="abs" style="left:27.4px;top:170px" width="16" height="16" viewBox="0 0 16 16" fill="none" stroke="#5a5a5a" stroke-width="1" stroke-linejoin="round">
<path d="M0.700 8.900 L3.800 7.500 L7.900 7.500 L7.900 2 L11 0.500 Q15 0.600 15 3.600 L15 15.100 L3.800 15.100 L0.700 12.300 Z" fill="#fff"/>
<path d="M0.700 8.900 L3.800 10.700 L3.800 15.100 M3.800 10.700 L11.900 10.700 L11.900 4.800 M11.900 4.800 L15 3.200 M7.900 2 L11.900 4.800"/>
</svg>
<div class="row" style="left:48.5px;top:171.2px;letter-spacing:-0.15px">Sleeve &lt;1&gt;</div>
<svg class="abs" style="left:156px;top:169px" width="18" height="18" viewBox="0 0 18 18"><path d="M3 4.2 h12" stroke="#222" stroke-width="2.4"/><path d="M3 9 h12" stroke="#222" stroke-width="1.6"/><path d="M3 15.8 l3.4 -4.2 M6.6 15.8 l3.4 -4.2 M10.2 15.8 l3.4 -4.2 M13.6 15.8 l1.8 -2.2" stroke="#222" stroke-width="1.6"/><circle cx="15.4" cy="15.8" r="0.6" fill="#222"/></svg>
<svg class="abs" style="left:27.4px;top:196.7px" width="16" height="16" viewBox="0 0 16 16" fill="none" stroke="#5a5a5a" stroke-width="1" stroke-linejoin="round">
<path d="M0.700 8.900 L3.800 7.500 L7.900 7.500 L7.900 2 L11 0.500 Q15 0.600 15 3.600 L15 15.100 L3.800 15.100 L0.700 12.300 Z" fill="#fff"/>
<path d="M0.700 8.900 L3.800 10.700 L3.800 15.100 M3.800 10.700 L11.900 10.700 L11.900 4.800 M11.900 4.800 L15 3.200 M7.900 2 L11.900 4.800"/>
</svg>
<div class="row" style="left:48.5px;top:197.9px;letter-spacing:0.1px">Barrel &lt;1&gt;</div>
<svg class="abs" style="left:27.4px;top:223.4px" width="16" height="16" viewBox="0 0 16 16" fill="none" stroke="#5a5a5a" stroke-width="1" stroke-linejoin="round">
<path d="M0.700 8.900 L3.800 7.500 L7.900 7.500 L7.900 2 L11 0.500 Q15 0.600 15 3.600 L15 15.100 L3.800 15.100 L0.700 12.300 Z" fill="#fff"/>
<path d="M0.700 8.900 L3.800 10.700 L3.800 15.100 M3.800 10.700 L11.900 10.700 L11.900 4.800 M11.900 4.800 L15 3.200 M7.900 2 L11.900 4.800"/>
</svg>
<div class="row" style="left:48.5px;top:224.6px;letter-spacing:-0.15px">Key &lt;1&gt;</div>
<svg class="abs" style="left:4px;top:251px" width="16" height="14" viewBox="0 0 16 14"><path d="M2 3.5 L7.8 9.5 L13.6 3.5" fill="none" stroke="#333" stroke-width="1.9"/></svg>
<div class="row" style="left:25px;top:251.3px;letter-spacing:-0.02px">Mate Features (6)</div>
<svg class="abs" style="left:36.5px;top:274.7px" width="18" height="18" viewBox="0 0 18 18" fill="none" stroke="#444" stroke-width="1.1">
<circle cx="9" cy="9" r="7.7"/><path d="M9 3.2 A5.8 5.8 0 1 0 14.8 9 L9 9 Z" stroke-width="1.2"/></svg>
<div class="row" style="left:58.5px;top:277.9px;letter-spacing:0.05px">Mate connector 1</div>
<svg class="abs" style="left:36.5px;top:301.40000000000003px" width="18" height="18" viewBox="0 0 18 18" fill="none" stroke="#444" stroke-width="1.1">
<circle cx="9" cy="9" r="7.7"/><path d="M9 3.2 A5.8 5.8 0 1 0 14.8 9 L9 9 Z" stroke-width="1.2"/></svg>
<div class="row" style="left:58.5px;top:304.6px;letter-spacing:0.05px">Mate connector 2</div>
<svg class="abs" style="left:37px;top:327.3px" width="18" height="20" viewBox="0 0 18 20" fill="none" stroke="#c4c4c4" stroke-width="1.1"><ellipse cx="8.5" cy="5" rx="6" ry="2.8"/><path d="M2.5 5 v9.5 a6 2.8 0 0 0 12 0 v-9.5"/><path d="M2.5 10 a6 2.8 0 0 0 12 0" /><path d="M3 11 l11 0 l0 4 l-5.5 2 l-5.5 -2z" fill="#d9d9d9" stroke="none"/></svg>
<div class="row dim" style="left:58.5px;top:331.3px;letter-spacing:-0.1px">Fastened 1</div>
<svg class="abs" style="left:36.5px;top:354.8px" width="18" height="18" viewBox="0 0 18 18" fill="none" stroke="#444" stroke-width="1.1">
<circle cx="9" cy="9" r="7.7"/><path d="M9 3.2 A5.8 5.8 0 1 0 14.8 9 L9 9 Z" stroke-width="1.2"/></svg>
<div class="row" style="left:58.5px;top:358.0px;letter-spacing:0.05px">Mate connector 3</div>
<svg class="abs" style="left:36.5px;top:381.5px" width="18" height="18" viewBox="0 0 18 18" fill="none" stroke="#444" stroke-width="1.1">
<circle cx="9" cy="9" r="7.7"/><path d="M9 3.2 A5.8 5.8 0 1 0 14.8 9 L9 9 Z" stroke-width="1.2"/></svg>
<div class="row" style="left:58.5px;top:384.7px;letter-spacing:0.05px">Mate connector 4</div>
<svg class="abs" style="left:35.5px;top:407.9px" width="20" height="20" viewBox="0 0 20 20" fill="none" stroke="#c4c4c4" stroke-width="1.2"><path d="M3 8 a7 3.6 0 0 1 14 0"/><path d="M1 9.5 L3.2 7 L5.6 9.8 M14.4 9.8 L16.8 7 L19 9.5" /><path d="M5 12 h10 M4 9.5 h12" stroke-width="1.6"/><ellipse cx="10" cy="14.5" rx="4.5" ry="2"/></svg>
<div class="row dim" style="left:58.5px;top:411.4px;letter-spacing:-0.1px">Revolute 1</div>
<div id="tabbar"><div id="tabbtn"></div><div id="tab1"></div><div id="tab2"></div></div>
<svg class="abs" style="left:9px;top:1110.300px" width="20" height="18" viewBox="0 0 20 18" fill="none" stroke="#4c4c4c" stroke-width="1.700"><path d="M1.5 2 h16.5"/><circle cx="6.8" cy="9.5" r="4.2"/><path d="M9.8 12.6 L13 16"/><path d="M12.5 7.2 h5 M13.5 10.8 h3.5" stroke-width="1.4"/></svg>
<svg class="abs" style="left:52px;top:1107px" width="22" height="22" viewBox="0 0 22 22" fill="#fff" stroke="#444" stroke-width="1" stroke-linejoin="round"><path d="M2 8.5 L2 17.5 L6 19.5 L9.5 18 L9.5 7 L6 5.5 Z"/><path d="M6 5.5 L6 19.5" /><path d="M9.5 4 L9.5 18 L14.5 20 L18.5 18.2 L18.5 3.8 L14 2 Z"/><path d="M14.5 20 L14.5 5.5 M9.5 4 L14.5 5.5 L18.5 3.8"/></svg>
<div class="tabt" style="left:75px;top:1110.700px;color:#5a5a5a;font-size:14px">Lock</div>
<svg class="abs" style="left:258.5px;top:1107.5px" width="20" height="20" viewBox="0 0 20 20" fill="none" stroke="#4a4a4a" stroke-width="1.1" stroke-linejoin="round">
<path d="M2 1.5 L14 1.5 L18 4.5 L18 18 L5.5 18 L2 14.5 Z" fill="#fff"/>
<path d="M2 1.5 L12.5 1.5 L12.5 12.5 L2 12.5 Z" fill="#8d8d8d" stroke="none"/>
<path d="M2 1.5 L5 3.5 L12.5 3.5 M5 3.5 L5 12.5" stroke="#bdbdbd" stroke-width="0.9"/>
<path d="M2 14.5 L5.5 11.5"/>
</svg>
<div class="tabt" style="left:282.3px;top:1110.5px;color:#222;">Assembly 1</div>
<div id="leftline"></div>
<div id="toolbar">
<div class="tb" style="left:6px;width:62px"></div>
<div class="tb" style="left:79px;width:63px"></div>
<div class="tb" style="left:153px;width:63px"></div>
<div class="tb" style="left:227px;width:77px"></div>
<div class="tb" style="left:315px;width:62px"></div>
<div class="tb" style="left:389px;width:61px"></div>
<div class="tb" style="left:462px;width:62px"></div>
<div class="tb" style="left:536px;width:62px"></div>
<div class="tb" style="left:610px;width:62px"></div>
</div>
<svg class="abs" style="left:584px;top:1021px" width="44" height="38" viewBox="0 0 44 38" fill="none" stroke="#111" stroke-width="2.3" stroke-linejoin="miter"><path d="M3 15 L21.5 3 L40 15"/><path d="M6.5 13.5 L6.5 34.5 L16.5 34.5 L16.5 24 L26.5 24 L26.5 34.5 L36.5 34.5 L36.5 13.5"/></svg>
<svg class="abs" style="left:666px;top:1027px" width="28" height="28" viewBox="0 0 28 28" fill="none" stroke="#111" stroke-width="1.700" stroke-linecap="round"><path d="M10.200 9.200 A4.600 4.600 0 1 1 18 7.500"/><path d="M18.800 10.200 A4.600 4.600 0 1 1 20.500 18"/><path d="M17.800 18.800 A4.600 4.600 0 1 1 10 20.500"/><path d="M9.200 17.800 A4.600 4.600 0 1 1 7.500 10"/><path d="M18.600 4.600 L18 7.800 L15 6.800 M23.400 18.600 L20.200 18 L21.200 15 M9.400 23.400 L10 20.200 L13 21.200 M4.600 9.400 L7.800 10 L6.800 13" stroke-width="1.500"/></svg>
<svg class="abs" style="left:741px;top:1029px" width="25" height="25" viewBox="0 0 25 25" fill="none" stroke="#111" stroke-width="1.600"><path d="M12.400 2.500 V22.500 M2.500 12.200 H22.500"/><path d="M9.800 4.400 L12.400 0.800 L15 4.400 Z M9.800 20.400 L12.400 24 L15 20.400 Z M4.400 9.600 L0.800 12.200 L4.400 14.800 Z M20.600 9.600 L24.200 12.200 L20.600 14.800 Z" fill="#111" stroke="none"/></svg>
<svg class="abs" style="left:808px;top:1024px" width="34" height="34" viewBox="0 0 34 34" fill="none" stroke="#111"><circle cx="15.5" cy="16.5" r="6.3" stroke-width="2.2"/><path d="M20 21 L28.5 29.5" stroke-width="2.5"/><path d="M16 2.5 L19.4 6 L12.6 6 Z M16 31.5 L19.4 28 L12.6 28 Z M2 16.5 L5.4 13.2 L5.4 19.8 Z M30.5 16.5 L27.1 13.2 L27.1 19.8 Z" fill="#111" stroke="none"/></svg>
<svg class="abs" style="left:855px;top:1035px" width="14" height="12" viewBox="0 0 14 12" fill="none" stroke="#555" stroke-width="1.6"><path d="M2 3 L7 8 L12 3"/></svg>
<svg class="abs" style="left:898.5px;top:1023.5px" width="34" height="38" viewBox="0 0 34 38" fill="none" stroke="#111" stroke-width="1.8"><ellipse cx="17" cy="9" rx="13.5" ry="6.2"/><path d="M3.5 9 V28 Q6 32 11 33 M30.500 9 V28 Q28 32 23 33"/><ellipse cx="17" cy="9.5" rx="5" ry="2" stroke-width="1.4"/><path d="M14 11 L11 33 M15.500 12 L14 30 M17 12 L17 27 M18.500 12 L20 30 M20 11 L23 33 M12.5 14 L7.5 31 M21.500 14 L26.500 31 M10.500 16 L5 28.500 M23.500 16 L29 28.500" stroke-width="1.3"/></svg>
<div class="t" style="left:970px;top:1032px;font-size:19.6px;font-weight:bold;color:#111;transform:scaleX(0.82);transform-origin:0 0;letter-spacing:0.2px">BOM</div>
<svg class="abs" style="left:1042px;top:1020px" width="42" height="40" viewBox="0 0 42 40" fill="none" stroke-linejoin="round"><path d="M2.500 4.500 L4.500 2.500 L12.500 2.500 L14.500 4.500 L14.500 12.500 L12.500 14.500 L4.500 14.500 L2.500 12.500 Z" fill="#c9c9c9" stroke="#8a8a8a" stroke-width="1"/><path d="M2.500 4.500 L12 4.500 L12 14.500 M12 4.500 L14.500 2.800" stroke="#8a8a8a" stroke-width="0.9"/><path d="M8.500 17 V20 H22 V23" stroke="#2438a8" stroke-width="1.5" stroke-dasharray="3 2"/><path d="M26 19 L30.500 15.500 L36.500 15.500 L39.500 19.500 L39.500 37.500 L21.500 37.500 L16.500 32.500 L16.500 27.500 L26 27.500 Z" fill="#fff" stroke="#111" stroke-width="1.5"/><path d="M16.500 27.500 L21.500 31.500 L33 31.500 L33 19 L26 19 M33 19 L36.500 15.500 M33 31.500 L39 37 M21.500 31.500 L21.500 37.500" stroke="#111" stroke-width="1.3"/><path d="M21.500 31.500 L33 31.500 L33 19.500 L27 19.500 L27 28 L18 28 Z" fill="#d9d9d9" stroke="none"/></svg>
<svg class="abs" style="left:1119.500px;top:1027.500px" width="35.300" height="27.900" viewBox="0 0 38 30" fill="none" stroke="#111" stroke-width="1.9"><ellipse cx="24" cy="8" rx="11.500" ry="6"/><ellipse cx="24" cy="8" rx="5" ry="2.300" stroke-width="1.6"/><path d="M12.500 8 V14 M35.500 8 V22 Q33 26.500 26 26.500 H2 V16.500 H22 Q30 16.500 35.500 12"/><path d="M6 21.500 V26 M10 23 V26 M14 21.500 V26 M18 23 V26 M22 21.500 V26 M26 23 V26" stroke-width="1.1"/></svg>
<svg class="abs" style="left:1196.500px;top:1026.500px" width="27.200" height="28.900" viewBox="0 0 32 34" fill="none" stroke="#111" stroke-width="1.6"><path d="M16 3 V28 M4 5.500 H28" stroke-width="2"/><path d="M7 6 L2.500 19 M7 6 L11.500 19 M25 6 L20.500 19 M25 6 L29.500 19" stroke-width="1.2"/><path d="M1.500 19.500 H12.500 M19.500 19.500 H30.500" stroke-width="2.600"/><path d="M3.500 30.500 H28.500" stroke-width="3"/><path d="M6 26.800 H26" stroke-width="1.3"/></svg>
<svg class="abs" style="left:1420px;top:80px" width="180" height="180" viewBox="0 0 180 180" font-family="Liberation Sans, sans-serif">
<g fill="#dfe6ee">
<path d="M91.300 15 L98.600 23.800 L84 23.800 Z"/><path d="M91.300 167.500 L98.600 158.800 L84 158.800 Z"/>
<path d="M14.600 91.300 L23.800 85 L23.800 97.700 Z"/><path d="M166.700 91.300 L158 85 L158 97.700 Z"/>
</g>
<g fill="none" stroke="#dfe6ee" stroke-width="4.200">
<path d="M69.500 25.500 Q51 30.500 39.500 40.500"/><path d="M113 25.500 Q131.500 30.500 143 40.500"/>
</g>
<g fill="#dfe6ee"><path d="M35.500 36 L35.500 47.800 L47.500 47.800 Z"/><path d="M147 36 L147 47.800 L135 47.800 Z"/></g>
<path d="M55 72 Q54.500 69 57 67 L76.500 51.800 Q79.500 49.600 83.500 50.300 L125 59.500 Q128.500 60.400 130 63 Q131.300 65 131.300 68 L131.300 108 Q131.300 112 128.500 114.500 L106 133.500 Q103 136 99 135 L60 122.500 Q55.600 121 55.600 116.500 Z" fill="#e4eaf0"/>
<g fill="#fdfeff">
<path d="M66 69.500 L79.500 59 Q82 57 85.500 57.700 L116.500 64.300 Q120.500 65.300 117.500 68 L104.500 79 Q101.500 81.300 98 80.400 L68.500 72.800 Q64 71.500 66 69.500 Z"/>
<path d="M60.500 83 Q60.500 78.500 65 79.700 L93 87.300 Q97 88.500 97 92.500 L97 122.500 Q97 127 93 125.800 L64.500 116.800 Q60.500 115.500 60.500 111.500 Z"/>
<path d="M105.500 93 Q105.500 89.500 108 87.300 L121 76 Q125 72.500 125 77 L125 103 Q125 106.500 122.500 108.800 L109.500 120.500 Q105.500 124 105.500 119.500 Z"/>
<circle cx="57" cy="72.500" r="3.400"/><circle cx="101" cy="84" r="4.800"/><circle cx="127.500" cy="63" r="3.200"/><circle cx="101.500" cy="131" r="3.200"/>
</g>
<path d="M80 52 L80 86 M80 86 L104 98 M80 86 L58 100" stroke="#f2f5f8" stroke-width="1" fill="none"/>
<path d="M48.500 72 L48.500 122.500" stroke="#2b35c8" stroke-width="1.200"/>
<path d="M48.500 122.500 L101 138.500" stroke="#e02424" stroke-width="1.200"/>
<path d="M48.500 122.500 L79.500 100" stroke="#43a043" stroke-width="1"/>
<text x="44.500" y="68" font-size="12" font-weight="bold" fill="#1d1db0">Z</text>
<text x="104.500" y="145" font-size="12" font-weight="bold" fill="#d42020">X</text>
<text x="79" y="97" font-size="9.500" fill="#9ed09e">Y</text>
<text transform="translate(62.800,103.500) rotate(14)" font-size="10.800" fill="#1c1c1c">Front</text>
<text transform="translate(82,63.500) rotate(24) skewX(-28)" font-size="8.800" fill="#1c1c1c">Top</text>
<text transform="translate(114.500,108) rotate(-52) skewX(-12)" font-size="8.400" fill="#2a2a2a">Right</text>
<g transform="translate(127,148)"><path d="M1 3.500 L3 1.500 L16 1 L18.500 3 L18.500 14 L10 18.500 L1 15.500 Z" fill="#9a9a9a" stroke="#444" stroke-width="1" stroke-linejoin="round"/><path d="M1.500 3.500 L10 5.500 L10 18 L1.500 15 Z" fill="#b8b8b8"/><path d="M10 5.500 L18 3.200 L18 13.800 L10 18 Z" fill="#7d7d7d"/><path d="M2 3.200 L3.500 2 L16 1.600 L18 3 L10 5.300 Z" fill="#efefef"/></g>
<path d="M153 156 h8.500 l-4.250 4.600 z" fill="#111"/>
</svg>
</div>
</body></html>
